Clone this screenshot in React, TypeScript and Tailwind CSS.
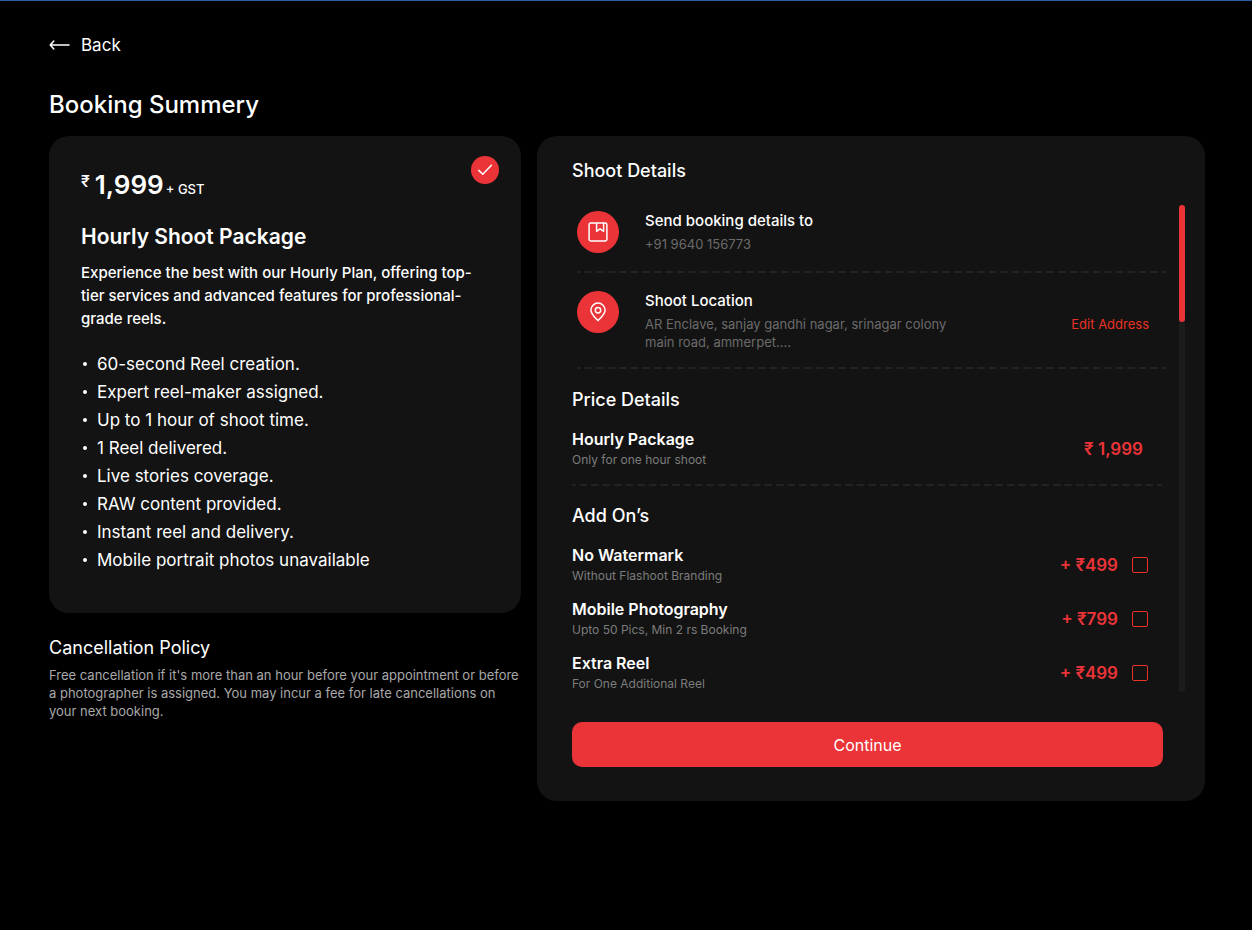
import type { ReactNode } from 'react';

const inclusions = [
  '60-second Reel creation.',
  'Expert reel-maker assigned.',
  'Up to 1 hour of shoot time.',
  '1 Reel delivered.',
  'Live stories coverage.',
  'RAW content provided.',
  'Instant reel and delivery.',
  'Mobile portrait photos unavailable',
];

const addOns = [
  { id: 'watermark', name: 'No Watermark', note: 'Without Flashoot Branding', price: '+ ₹499' },
  { id: 'photography', name: 'Mobile Photography', note: 'Upto 50 Pics, Min 2 rs Booking', price: '+ ₹799' },
  { id: 'extra-reel', name: 'Extra Reel', note: 'For One Additional Reel', price: '+ ₹499' },
];

function DashedRule() {
  return (
    <svg className="block h-[2px] w-full" aria-hidden="true">
      <line x1="0" y1="1" x2="100%" y2="1" stroke="#2a2a2a" strokeWidth="1.6" strokeDasharray="7.6 3.95" strokeDashoffset="4" />
    </svg>
  );
}

function IconDisc({ children }: { children: ReactNode }) {
  return (
    <span className="flex size-[42px] shrink-0 items-center justify-center rounded-full bg-[#eb3438]">
      {children}
    </span>
  );
}

function PackageCard() {
  return (
    <section className="rounded-[20px] bg-[#131313] pt-5 pr-[22px] pb-[39px] pl-8">
      <div className="flex items-start justify-between">
        <p className="flex pt-[13px]">
          <span className="pt-[2px] text-[16px] leading-5 font-medium">₹</span>
          <span className="ml-[5px] text-[26px] leading-8 font-semibold">1,999</span>
          <span className="ml-[2px] pt-[10px] text-[13px] leading-5 font-medium">+ GST</span>
        </p>
        <span className="flex size-7 items-center justify-center rounded-full bg-[#eb3438]">
          <svg width="28" height="28" viewBox="0 0 28 28" fill="none" aria-hidden="true">
            <path d="M7.8 14.4 11.8 18.3 20.4 9.3" stroke="#fff" strokeWidth="1.5" strokeLinecap="round" strokeLinejoin="round" />
          </svg>
        </span>
      </div>
      <h2 className="mt-[22px] text-[21px] leading-7 font-semibold">Hourly Shoot Package</h2>
      <p className="mt-[10px] text-[15px] leading-[23px] font-medium">
        Experience the best with our Hourly Plan, offering top-
        <br />
        tier services and advanced features for professional-
        <br />
        grade reels.
      </p>
      <ul className="mt-5 text-[17px] leading-[28px]">
        {inclusions.map((item) => (
          <li key={item} className="flex items-center gap-[10px]">
            <span className="ml-[2px] size-1 rounded-full bg-white" />
            {item}
          </li>
        ))}
      </ul>
    </section>
  );
}

function ShootDetails() {
  return (
    <section className="rounded-[20px] bg-[#131313] pt-[21px] pr-5 pb-[34px] pl-[35px]">
      <h2 className="text-[18px] leading-7 font-medium">Shoot Details</h2>
      <div className="mt-5 flex">
        <div className="min-w-0 flex-1 pt-[6px] pr-[13px]">
          <div className="flex gap-[26px] pb-[18px] pl-[5px]">
            <IconDisc>
              <svg width="20" height="20" viewBox="0 0 20 20" fill="none" stroke="#fff" strokeWidth="1.5" strokeLinejoin="round" aria-hidden="true">
                <rect x="1.1" y="1.1" width="17.8" height="17.8" rx="1.6" />
                <path d="M8.6 1.1v8.2l3.5-2.5 3.5 2.5V1.1" />
              </svg>
            </IconDisc>
            <div>
              <h3 className="text-[15px] leading-5 font-medium">Send booking details to</h3>
              <p className="mt-1 text-[13px] leading-[18px] text-[#6b6b6b]">+91 9640 156773</p>
            </div>
          </div>
          <div className="pl-[5px]"><DashedRule /></div>
          <div className="flex gap-[26px] pt-[18px] pb-4 pl-[5px]">
            <IconDisc>
              <svg width="20" height="20" viewBox="0 0 20 20" fill="none" stroke="#fff" strokeWidth="1.5" strokeLinejoin="round" aria-hidden="true">
                <path d="M10 18.6C6.3 14.6 2.9 11.8 2.9 8.2a7.1 7.1 0 0 1 14.2 0c0 3.6-3.4 6.4-7.1 10.4Z" />
                <circle cx="10" cy="8.3" r="2.7" />
              </svg>
            </IconDisc>
            <div className="min-w-0 flex-1">
              <h3 className="text-[15px] leading-5 font-medium">Shoot Location</h3>
              <p className="mt-1 text-[13px] leading-[18px] text-[#6b6b6b]">
                AR Enclave, sanjay gandhi nagar, srinagar colony
                <br />
                main road, ammerpet....
              </p>
            </div>
            <a href="#address" className="mt-6 mr-[17px] self-start text-[13px] leading-[18px] text-[#e93226]">
              Edit Address
            </a>
          </div>
          <div className="pl-[5px]"><DashedRule /></div>

          <h2 className="mt-[17px] text-[18px] leading-7 font-medium">Price Details</h2>
          <div className="mt-[15px] mb-4 flex items-center justify-between pr-[23px]">
            <div>
              <h3 className="text-[16px] leading-5 font-semibold">Hourly Package</h3>
              <p className="mt-[3px] text-[12px] leading-4 text-[#7c7c7c]">Only for one hour shoot</p>
            </div>
            <span className="text-[17px] leading-5 font-semibold text-[#eb3438]">₹ 1,999</span>
          </div>
          <div className="pr-[4px]"><DashedRule /></div>

          <h2 className="mt-4 text-[18px] leading-7 font-medium">Add On’s</h2>
          <div className="mt-[15px] grid gap-[15px] pr-[18px]">
            {addOns.map((addOn) => (
              <label key={addOn.id} htmlFor={addOn.id} className="flex items-center">
                <span className="flex-1">
                  <span className="block text-[16px] leading-5 font-semibold">{addOn.name}</span>
                  <span className="mt-[3px] block text-[12px] leading-4 text-[#7c7c7c]">{addOn.note}</span>
                </span>
                <span className="text-[17px] leading-5 font-semibold text-[#eb3438]">{addOn.price}</span>
                <input
                  id={addOn.id}
                  type="checkbox"
                  className="ml-[14px] size-4 appearance-none rounded-[2px] border border-[#e93226] checked:bg-[#eb3438]"
                />
              </label>
            ))}
          </div>
        </div>
        <div className="w-[6px] rounded-full bg-[#1c1c1c]" aria-hidden="true">
          <div className="h-[117px] rounded-full bg-[#eb3438]" />
        </div>
      </div>
      <div className="mt-[30px] pr-[22px]">
        <button type="button" className="h-[45px] w-full rounded-[10px] bg-[#eb3438] text-[16px] leading-5">
          Continue
        </button>
      </div>
    </section>
  );
}

export default function App() {
  return (
    <main className="min-h-screen border-t border-[#2a5d9c] bg-black pr-[47px] pb-8 pl-[49px] font-['Inter',sans-serif] text-white">
      <a href="#back" className="mt-8 inline-flex items-center gap-[11px] text-[17px] leading-6">
        <svg width="21" height="12" viewBox="0 0 21 12" fill="none" stroke="#fff" strokeWidth="1.5" strokeLinecap="round" strokeLinejoin="round" aria-hidden="true">
          <path d="M20 6H1.2M4.8 2 1.2 6l3.6 4" />
        </svg>
        Back
      </a>
      <h1 className="mt-8 text-[24px] leading-8 font-medium">Booking Summery</h1>
      <div className="mt-[15px] grid grid-cols-[472fr_668fr] items-start gap-4">
        <div>
          <PackageCard />
          <h2 className="mt-[21px] text-[18px] leading-7">Cancellation Policy</h2>
          <p className="mt-1 text-[13px] leading-[18px] text-[#a8a8a8]">
            Free cancellation if it's more than an hour before your appointment or before
            <br />
            a photographer is assigned. You may incur a fee for late cancellations on
            <br />
            your next booking.
          </p>
        </div>
        <ShootDetails />
      </div>
    </main>
  );
}
